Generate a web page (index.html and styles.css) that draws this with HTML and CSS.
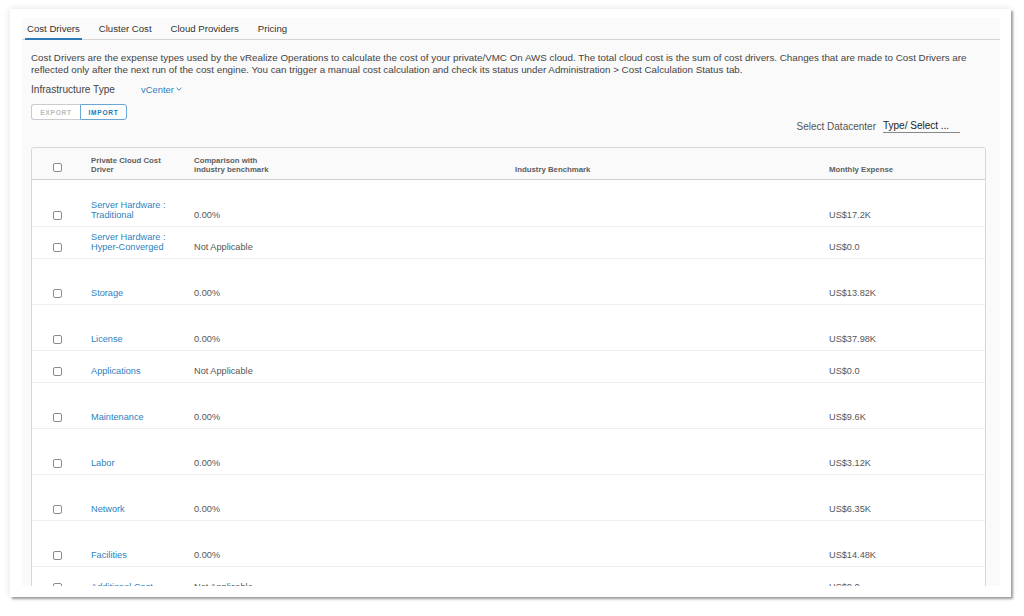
FILE: index.html
```html
<!DOCTYPE html>
<html lang="en">
<head>
    <meta charset="UTF-8">
    <meta name="viewport" content="width=device-width, initial-scale=1.0">
    <title>Cost Drivers</title>
    <link rel="stylesheet" href="styles.css">
</head>
<body>
    <div class="frame">
        <div class="inner">
            <div class="tabs">
                <div class="tab active">Cost Drivers</div>
                <div class="tab">Cluster Cost</div>
                <div class="tab">Cloud Providers</div>
                <div class="tab">Pricing</div>
            </div>

            <div class="content">
                <p class="desc">
                    Cost Drivers are the expense types used by the vRealize Operations to calculate the cost of your private/VMC On AWS cloud. The total cloud cost is the sum of cost drivers. Changes that are made to Cost Drivers are<br>
                    reflected only after the next run of the cost engine. You can trigger a manual cost calculation and check its status under Administration &gt; Cost Calculation Status tab.
                </p>

                <div class="infra">
                    <span class="infra-label">Infrastructure Type</span>
                    <span class="infra-value">vCenter
                        <svg width="6" height="4" viewBox="0 0 6 4"><path d="M0.5 0.8 L3 3.2 L5.5 0.8" fill="none" stroke="#2d7fc0" stroke-width="0.9"/></svg>
                    </span>
                </div>

                <div class="btn-group">
                    <button class="btn disabled">EXPORT</button>
                    <button class="btn primary">IMPORT</button>
                </div>

                <div class="dc-row">
                    <span class="dc-label">Select Datacenter</span>
                    <span class="dc-input">Type/ Select ...</span>
                </div>

                <div class="grid">
                    <div class="row head">
                        <div class="cell check"><span class="box"></span></div>
                        <div class="cell">Private Cloud Cost<br>Driver</div>
                        <div class="cell">Comparison with<br>industry benchmark</div>
                        <div class="cell">Industry Benchmark</div>
                        <div class="cell">Monthly Expense</div>
                    </div>

                    <div class="row tall first">
                        <div class="cell check"><span class="box"></span></div>
                        <div class="cell link">Server Hardware :<br>Traditional</div>
                        <div class="cell">0.00%</div>
                        <div class="cell"></div>
                        <div class="cell">US$17.2K</div>
                    </div>
                    <div class="row">
                        <div class="cell check"><span class="box"></span></div>
                        <div class="cell link">Server Hardware :<br>Hyper-Converged</div>
                        <div class="cell">Not Applicable</div>
                        <div class="cell"></div>
                        <div class="cell">US$0.0</div>
                    </div>
                    <div class="row tall">
                        <div class="cell check"><span class="box"></span></div>
                        <div class="cell link">Storage</div>
                        <div class="cell">0.00%</div>
                        <div class="cell"></div>
                        <div class="cell">US$13.82K</div>
                    </div>
                    <div class="row tall">
                        <div class="cell check"><span class="box"></span></div>
                        <div class="cell link">License</div>
                        <div class="cell">0.00%</div>
                        <div class="cell"></div>
                        <div class="cell">US$37.98K</div>
                    </div>
                    <div class="row">
                        <div class="cell check"><span class="box"></span></div>
                        <div class="cell link">Applications</div>
                        <div class="cell">Not Applicable</div>
                        <div class="cell"></div>
                        <div class="cell">US$0.0</div>
                    </div>
                    <div class="row tall">
                        <div class="cell check"><span class="box"></span></div>
                        <div class="cell link">Maintenance</div>
                        <div class="cell">0.00%</div>
                        <div class="cell"></div>
                        <div class="cell">US$9.6K</div>
                    </div>
                    <div class="row tall">
                        <div class="cell check"><span class="box"></span></div>
                        <div class="cell link">Labor</div>
                        <div class="cell">0.00%</div>
                        <div class="cell"></div>
                        <div class="cell">US$3.12K</div>
                    </div>
                    <div class="row tall">
                        <div class="cell check"><span class="box"></span></div>
                        <div class="cell link">Network</div>
                        <div class="cell">0.00%</div>
                        <div class="cell"></div>
                        <div class="cell">US$6.35K</div>
                    </div>
                    <div class="row tall">
                        <div class="cell check"><span class="box"></span></div>
                        <div class="cell link">Facilities</div>
                        <div class="cell">0.00%</div>
                        <div class="cell"></div>
                        <div class="cell">US$14.48K</div>
                    </div>
                    <div class="row">
                        <div class="cell check"><span class="box"></span></div>
                        <div class="cell link">Additional Cost</div>
                        <div class="cell">Not Applicable</div>
                        <div class="cell"></div>
                        <div class="cell">US$0.0</div>
                    </div>
                </div>
            </div>
        </div>
    </div>
</body>
</html>
```

FILE: styles.css
```css
* {
    margin: 0;
    padding: 0;
    box-sizing: border-box;
    font-family: "Liberation Sans", Arial, sans-serif;
}

body {
    background-color: #fff;
    color: #333;
    width: 1024px;
    height: 616px;
    overflow: hidden;
}

.frame {
    margin: 9px 0 0 10px;
    width: 1001px;
    height: 588px;
    padding: 9px 11px 11px 12px;
    background-color: #fff;
    box-shadow: 2px 2px 2px rgba(0, 0, 0, 0.35), 0 0 7px rgba(0, 0, 0, 0.12);
}

.inner {
    height: 100%;
    background-color: #fafafa;
    overflow: hidden;
}

/* tabs */
.tabs {
    display: flex;
    height: 22px;
    border-bottom: 1px solid #d4d4d4;
    padding-left: 3px;
}

.tab {
    font-size: 9.6px;
    color: #333;
    padding: 5px 2px 0;
    margin-right: 15px;
    margin-bottom: -1px;
    border-bottom: 2px solid transparent;
}

.tab.active {
    border-bottom-color: #2a7ab8;
}

.content {
    padding: 0 14px 0 9px;
}

.desc {
    margin-top: 12px;
    font-size: 9.8px;
    line-height: 12px;
    color: #444;
    white-space: nowrap;
}

.infra {
    margin-top: 7px;
    display: flex;
    align-items: center;
    height: 12px;
    font-size: 10.1px;
}

.infra-label {
    width: 110px;
    color: #444;
}

.infra-value {
    color: #2d7fc0;
    display: flex;
    align-items: center;
    gap: 2px;
    font-size: 9.4px;
}

.btn-group {
    margin-top: 9px;
    display: flex;
}

.btn {
    height: 16px;
    font-size: 6.6px;
    font-weight: bold;
    letter-spacing: 0.7px;
    background: #fff;
    border: 1px solid #ccc;
    padding: 0;
}

.btn.disabled {
    width: 49px;
    color: #bbb;
    border-right: none;
    border-radius: 3px 0 0 3px;
}

.btn.primary {
    width: 47px;
    color: #2a76b0;
    border-color: #6aa7d6;
    border-radius: 0 3px 3px 0;
}

.dc-row {
    display: flex;
    justify-content: flex-end;
    align-items: center;
    height: 14px;
    margin-top: -1px;
    padding-right: 26px;
    font-size: 10px;
}

.dc-label {
    color: #555;
    margin-right: 7px;
}

.dc-input {
    color: #222;
    width: 77px;
    border-bottom: 1px solid #888;
    line-height: 12px;
}

/* datagrid */
.grid {
    margin-top: 14px;
    border: 1px solid #d7d7d7;
    border-radius: 3px 3px 0 0;
    background-color: #fff;
}

.row {
    display: grid;
    grid-template-columns: 59px 103px 321px 314px 1fr;
    align-items: end;
    min-height: 32px;
    padding-bottom: 6px;
    border-bottom: 1px solid #efefef;
    font-size: 9.2px;
    line-height: 10px;
    color: #565656;
}

.row.tall {
    min-height: 46px;
}

.row.first {
    min-height: 47px;
}

.row.head {
    min-height: 32px;
    padding-bottom: 5px;
    background-color: #fafafa;
    border-bottom: 1px solid #cfcfcf;
    border-radius: 3px 3px 0 0;
    font-size: 7.8px;
    font-weight: bold;
    line-height: 9px;
    color: #5e5e5e;
}

.row.head .check {
    margin-bottom: 2px;
}

.cell.check {
    padding-left: 21px;
    display: flex;
    align-items: center;
    height: 10px;
}

.box {
    display: block;
    width: 9px;
    height: 9px;
    border: 1px solid #8c8c8c;
    border-radius: 2px;
    background: #fff;
}

.link {
    color: #2d7fc0;
}
```
